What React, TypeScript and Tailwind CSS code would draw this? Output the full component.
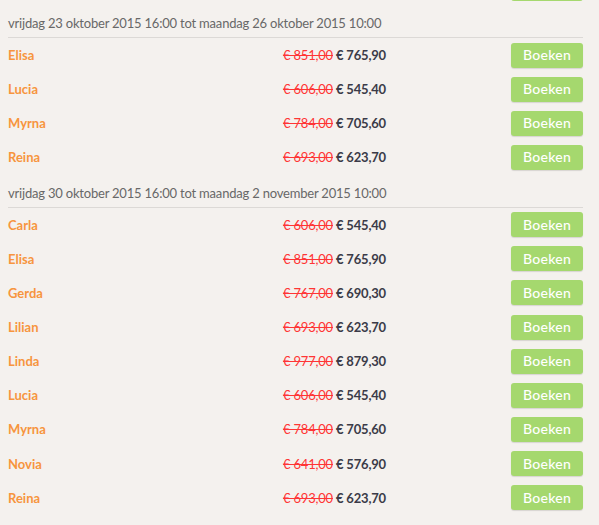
import React from "react";

type Offer = { name: string; oldPrice: string; newPrice: string };

const sections: { title: string; offers: Offer[] }[] = [
  {
    title: "vrijdag 23 oktober 2015 16:00 tot maandag 26 oktober 2015 10:00",
    offers: [
      { name: "Elisa", oldPrice: "€ 851,00", newPrice: "€ 765,90" },
      { name: "Lucia", oldPrice: "€ 606,00", newPrice: "€ 545,40" },
      { name: "Myrna", oldPrice: "€ 784,00", newPrice: "€ 705,60" },
      { name: "Reina", oldPrice: "€ 693,00", newPrice: "€ 623,70" },
    ],
  },
  {
    title: "vrijdag 30 oktober 2015 16:00 tot maandag 2 november 2015 10:00",
    offers: [
      { name: "Carla", oldPrice: "€ 606,00", newPrice: "€ 545,40" },
      { name: "Elisa", oldPrice: "€ 851,00", newPrice: "€ 765,90" },
      { name: "Gerda", oldPrice: "€ 767,00", newPrice: "€ 690,30" },
      { name: "Lilian", oldPrice: "€ 693,00", newPrice: "€ 623,70" },
      { name: "Linda", oldPrice: "€ 977,00", newPrice: "€ 879,30" },
      { name: "Lucia", oldPrice: "€ 606,00", newPrice: "€ 545,40" },
      { name: "Myrna", oldPrice: "€ 784,00", newPrice: "€ 705,60" },
      { name: "Novia", oldPrice: "€ 641,00", newPrice: "€ 576,90" },
      { name: "Reina", oldPrice: "€ 693,00", newPrice: "€ 623,70" },
    ],
  },
];

function OfferRow({ offer }: { offer: Offer }) {
  return (
    <div className="grid h-[34.15px] grid-cols-[275px_1fr_auto] items-center">
      <span className="font-bold text-[#f7953e]">{offer.name}</span>
      <span className="tracking-[-0.2px]">
        <span className="text-[#ff3535] line-through">{offer.oldPrice}</span>{" "}
        <span className="font-bold text-[#3b3b48]">{offer.newPrice}</span>
      </span>
      <button className="h-[25px] w-[72px] rounded-[3px] bg-[#a5d86e] text-[14px] font-medium tracking-[0.3px] text-white shadow-[0_1px_1px_rgba(0,0,0,0.12)]">
        Boeken
      </button>
    </div>
  );
}

export default function App() {
  return (
    <div className="h-[525px] overflow-hidden bg-[#f4f1ee] pl-2 pr-4 font-['Lato',sans-serif] text-[13px] leading-4">
      <div className="-mt-[29px]">
        {/* rij van de vorige periode, valt grotendeels buiten beeld */}
        <div className="flex h-[34px] items-center justify-end">
          <div className="h-[25px] w-[72px] rounded-[3px] bg-[#a5d86e]" />
        </div>

        {sections.map((section) => (
          <div key={section.title}>
            <div className="border-b border-[#dcd9d6] pt-[10px] pb-[6px] tracking-[-0.2px] text-[#686868]">
              {section.title}
            </div>
            {section.offers.map((offer, i) => (
              <OfferRow key={i} offer={offer} />
            ))}
          </div>
        ))}
      </div>
    </div>
  );
}
